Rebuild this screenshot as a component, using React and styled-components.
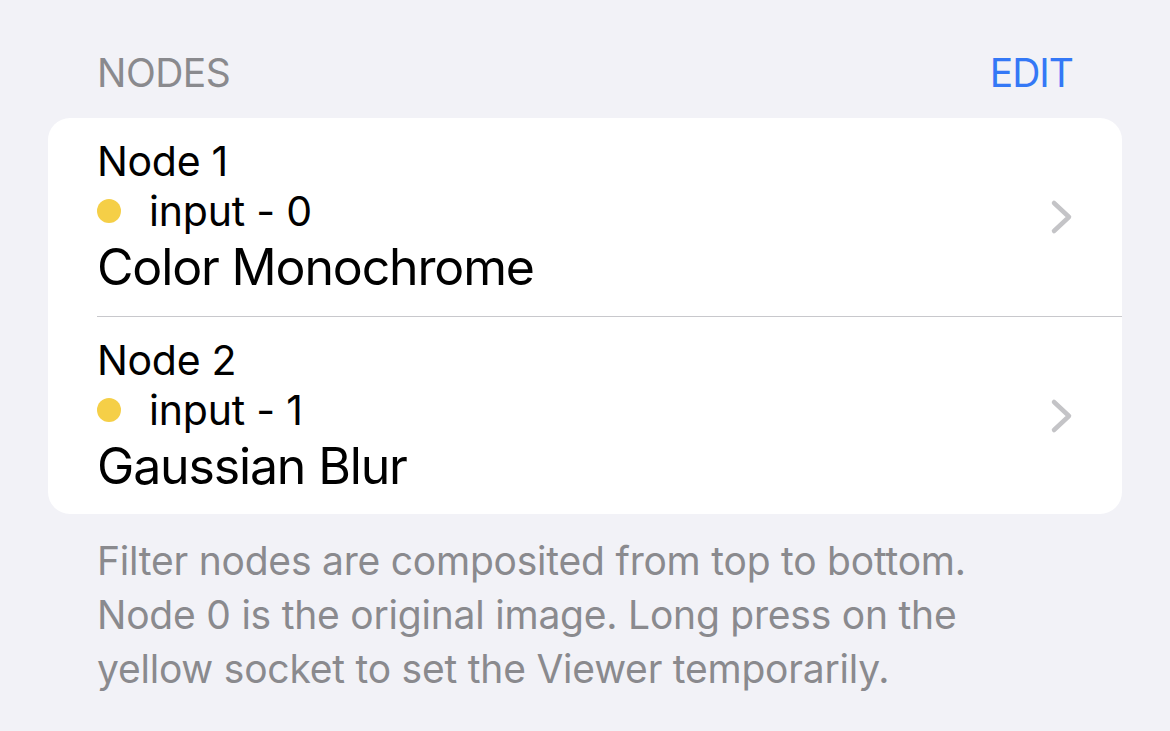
import React from "react";
import styled, { createGlobalStyle } from "styled-components";

const Global = createGlobalStyle`
  html, body { margin: 0; padding: 0; background: #f2f2f7; }
  body { font-family: Inter, "Noto Sans", sans-serif; -webkit-font-smoothing: antialiased; }
`;

const Page = styled.div`
  width: 1170px;
  min-height: 731px;
  box-sizing: border-box;
  padding: 48px 48px 0 48px;
  background: #f2f2f7;
`;

const SectionHeader = styled.div`
  display: flex;
  justify-content: space-between;
  align-items: baseline;
  padding: 0 49px;
  height: 70px;
  font-size: 39px;
  line-height: 50px;
  letter-spacing: -0.5px;
`;

const HeaderTitle = styled.span`
  color: #8a8a8e;
`;

const HeaderAction = styled.span`
  color: #3478f6;
  letter-spacing: -1px;
`;

const Card = styled.div`
  background: #ffffff;
  border-radius: 22px;
  overflow: hidden;
`;

const Row = styled.div`
  display: flex;
  align-items: center;
  height: 198px;
  padding: 0 48px 0 49px;
  box-sizing: border-box;
  position: relative;
  & + & {
    border-top: 1px solid transparent;
  }
  & + &::before {
    content: "";
    position: absolute;
    top: -1px;
    left: 49px;
    right: 0;
    height: 1px;
    background: #c8c8cc;
  }
`;

const RowText = styled.div`
  flex: 1;
  display: flex;
  flex-direction: column;
  color: #000;
`;

const NodeName = styled.div`
  font-size: 41px;
  line-height: 50px;
  letter-spacing: -0.3px;
`;

const Socket = styled.div`
  display: flex;
  align-items: center;
  font-size: 41px;
  line-height: 50px;
  letter-spacing: -0.2px;
`;

const Dot = styled.span`
  width: 24px;
  height: 24px;
  border-radius: 50%;
  background: #f5cf47;
  margin-right: 28px;
  flex: none;
`;

const FilterName = styled.div`
  font-size: 50px;
  line-height: 62px;
  letter-spacing: -1.15px;
`;

const Chevron = styled.svg`
  width: 24px;
  height: 36px;
  flex: none;
`;

const Footer = styled.p`
  margin: 20px 0 0;
  padding: 0 49px;
  font-size: 39px;
  line-height: 54px;
  color: #8a8a8e;
  letter-spacing: -0.22px;
`;

const nodes = [
  { name: "Node 1", input: "input - 0", filter: "Color Monochrome" },
  { name: "Node 2", input: "input - 1", filter: "Gaussian Blur" },
];

export default function App() {
  return (
    <Page>
      <Global />
      <SectionHeader>
        <HeaderTitle>NODES</HeaderTitle>
        <HeaderAction>EDIT</HeaderAction>
      </SectionHeader>
      <Card>
        {nodes.map((n) => (
          <Row key={n.name}>
            <RowText>
              <NodeName>{n.name}</NodeName>
              <Socket>
                <Dot />
                {n.input}
              </Socket>
              <FilterName>{n.filter}</FilterName>
            </RowText>
            <Chevron viewBox="0 0 24 36">
              <path
                d="M4 4 L19 18 L4 32"
                fill="none"
                stroke="#c4c4c7"
                strokeWidth="4.5"
                strokeLinecap="round"
                strokeLinejoin="round"
              />
            </Chevron>
          </Row>
        ))}
      </Card>
      <Footer>
        Filter nodes are composited from top to bottom.
        <br />
        Node 0 is the original image. Long press on the
        <br />
        yellow socket to set the Viewer temporarily.
      </Footer>
    </Page>
  );
}
